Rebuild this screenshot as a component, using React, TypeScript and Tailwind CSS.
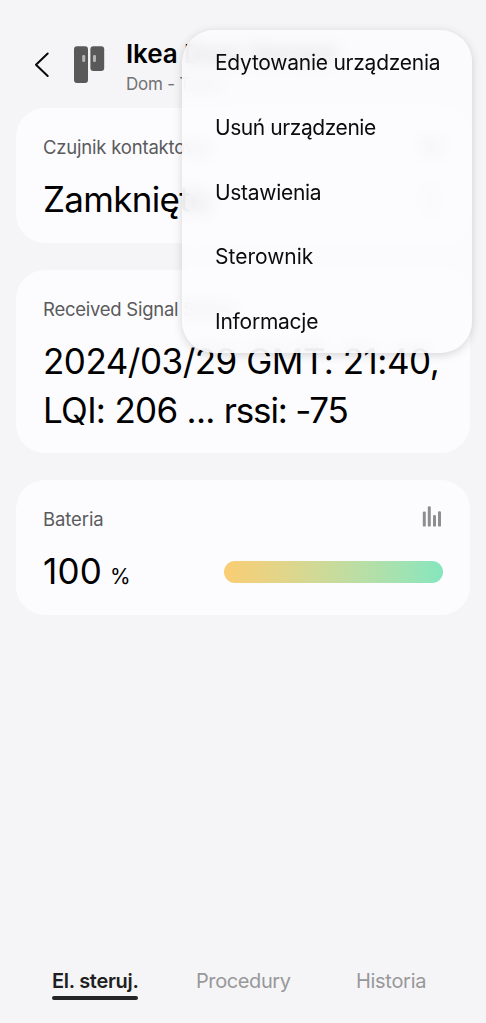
import React from 'react';

const MENU_ITEMS = [
  { label: 'Edytowanie urządzenia', tracking: 'tracking-[-0.25px]' },
  { label: 'Usuń urządzenie', tracking: 'tracking-[-0.43px]' },
  { label: 'Ustawienia', tracking: 'tracking-[-0.3px]' },
  { label: 'Sterownik', tracking: 'tracking-[0px]' },
  { label: 'Informacje', tracking: 'tracking-[-0.23px]' },
];

const DeviceIcon: React.FC = () => (
  <svg width="31" height="38" viewBox="0 0 31 38" className="shrink-0">
    <rect x="0" y="0.3" width="14" height="36.7" rx="3" fill="#595959" />
    <rect x="16.4" y="0.3" width="13.8" height="24.7" rx="3" fill="#595959" />
    <rect x="8.2" y="9" width="3" height="7" rx="1.2" fill="#b5b5b5" />
    <rect x="19" y="9" width="3" height="7" rx="1.2" fill="#b5b5b5" />
  </svg>
);

const ChartIcon: React.FC = () => (
  <svg width="20" height="21" viewBox="0 0 20 21" fill="#8e8e90" className="mr-px -mt-[6px]">
    <rect x="0.8" y="5.6" width="3" height="15" rx="1.2" />
    <rect x="5.8" y="0.2" width="3" height="20.4" rx="1.2" />
    <rect x="11" y="9" width="3" height="11.6" rx="1.2" />
    <rect x="16" y="5.2" width="3" height="15.4" rx="1.2" />
  </svg>
);

const Header: React.FC = () => (
  <header className="flex h-[108px] items-start pl-[34px]">
    <svg width="16" height="26" viewBox="0 0 16 26" className="mt-[52px] shrink-0">
      <path d="M13.7 1.5 2 12.8 13.7 24" fill="none" stroke="#0a0a0a" strokeWidth="2" strokeLinecap="round" strokeLinejoin="round" />
    </svg>
    <div className="ml-6 mt-[46px]">
      <DeviceIcon />
    </div>
    <div className="ml-[21px] mt-[38px] whitespace-nowrap">
      <h1 className="text-[26px] font-semibold leading-8 tracking-[-0.1px] text-black">Ikea Door Sensor</h1>
      <p className="mt-[2px] text-[17px] leading-6 tracking-[-0.2px] text-[#727274]">Dom - Taras</p>
    </div>
  </header>
);

const Menu: React.FC = () => (
  <div className="absolute left-[182px] top-[30px] h-[323px] w-[290px] rounded-[32px] bg-[#fcfcfe]/88 shadow-[0_2px_10px_rgba(0,0,0,0.16)] backdrop-blur-[8px]">
    <ul className="flex flex-col">
      {MENU_ITEMS.map(({ label, tracking }) => (
        <li key={label} className={`h-[64.75px] whitespace-nowrap pl-[33px] text-[21px] leading-[65px] text-[#0c0c0c] ${tracking}`}>
          {label}
        </li>
      ))}
    </ul>
  </div>
);

const App: React.FC = () => {
  return (
    <div className="relative flex h-[1023px] w-[486px] flex-col overflow-hidden bg-[#f5f5f7] font-['Inter',sans-serif]">
      <Header />

      <main className="flex flex-1 flex-col gap-[27px] px-4">
        <section className="h-[135px] rounded-[29px] bg-[#fcfcfe] px-[27px] pt-[26px]">
          <div className="flex items-center justify-between">
            <h2 className="text-[18.5px] leading-[26px] tracking-[-0.2px] text-[#5a5a5c]">Czujnik kontaktowy</h2>
            <ChartIcon />
          </div>
          <div className="mt-[15px] flex items-center justify-between">
            <p className="text-[35px] leading-[48px] tracking-[-0.7px] text-black">Zamknięto</p>
            <div className="mr-2 h-8 w-2.5 rounded-full border-2 border-[#b0b0b2]" />
          </div>
        </section>

        <section className="h-[183px] rounded-[29px] bg-[#fcfcfe] pl-[27px] pt-[26px]">
          <h2 className="text-[18.5px] leading-[26px] tracking-[-0.25px] text-[#5a5a5c]">Received Signal Status</h2>
          <p className="mt-[15px] whitespace-nowrap text-[35px] leading-[48.5px] tracking-[-0.5px] text-black">
            2024/03/29 GMT: 21:40,
            <br />
            <span className="tracking-[-0.7px]">LQI: 206 ... </span>
            <span className="tracking-[-1.2px]">rssi: -75</span>
          </p>
        </section>

        <section className="h-[135px] rounded-[29px] bg-[#fcfcfe] px-[27px] pt-[26px]">
          <div className="flex items-center justify-between">
            <h2 className="text-[18.5px] leading-[26px] tracking-[-0.1px] text-[#5a5a5c]">Bateria</h2>
            <ChartIcon />
          </div>
          <div className="mt-[15px] flex items-start justify-between">
            <p className="text-[35px] leading-[48px] tracking-[0.2px] text-black">
              100<span className="ml-2 text-[21px]">%</span>
            </p>
            <div className="mt-[14px] h-[22px] w-[219px] rounded-full bg-linear-to-r from-[#facd73] to-[#85e6be]" />
          </div>
        </section>
      </main>

      <nav className="flex h-[56px] items-start whitespace-nowrap pl-[52px] text-[20px] leading-7 text-[#98989a]">
        <div className="w-[86px]">
          <span className="font-semibold tracking-[-0.3px] text-[#1f1f21]">El. steruj.</span>
          <div className="mt-px h-[3.5px] rounded-full bg-[#252527]" />
        </div>
        <span className="ml-[58px] w-[95px] tracking-[-0.4px]">Procedury</span>
        <span className="ml-[65px] tracking-[-0.3px]">Historia</span>
      </nav>

      <Menu />
    </div>
  );
};

export default App;
